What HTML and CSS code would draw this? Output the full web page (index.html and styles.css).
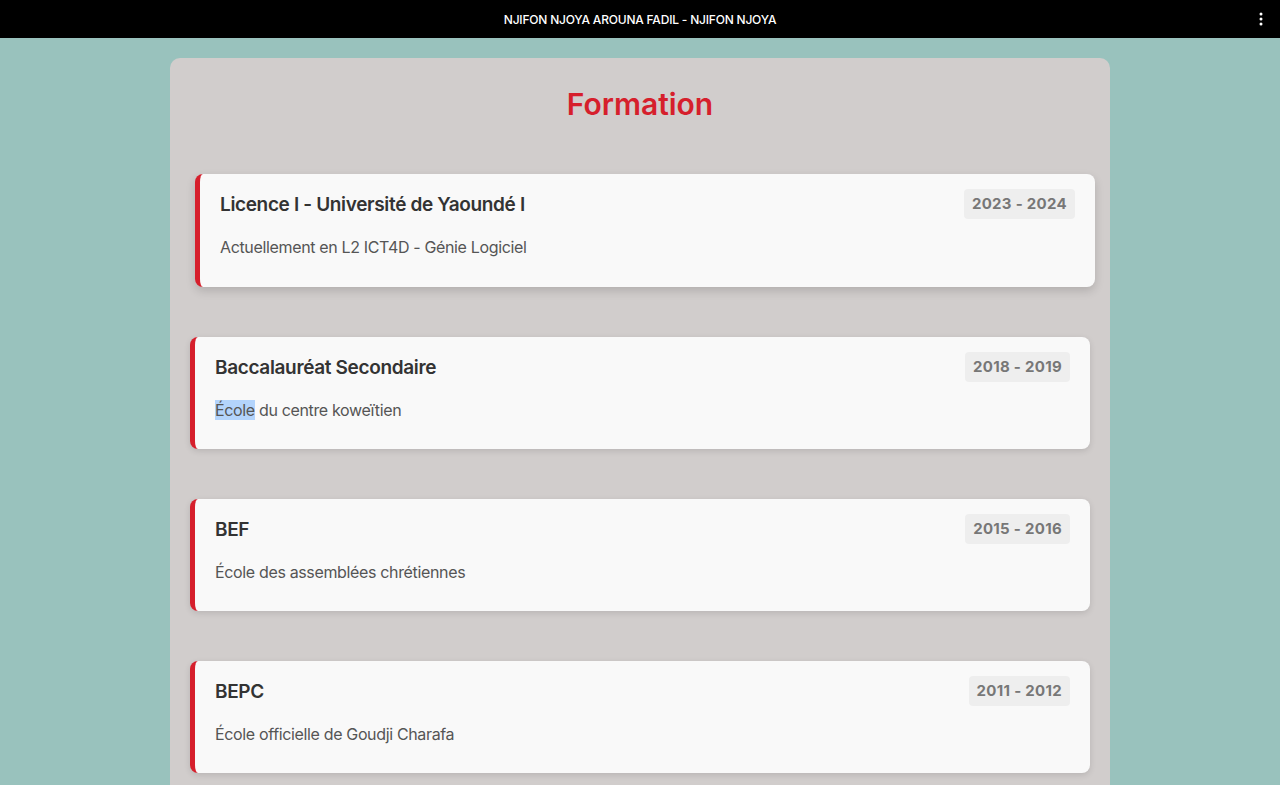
FILE: index.html
```html
<!DOCTYPE html>
<html lang="fr">
<head>
<meta charset="utf-8">
<title>NJIFON NJOYA AROUNA FADIL - NJIFON NJOYA</title>
<link rel="stylesheet" href="styles.css">
</head>
<body>
<header class="topbar">
  <span class="topbar-title">NJIFON NJOYA AROUNA FADIL - NJIFON NJOYA</span>
  <svg class="kebab" width="4" height="14" viewBox="0 0 4 14"><circle cx="2" cy="2" r="1.5" fill="#fff"/><circle cx="2" cy="7" r="1.5" fill="#fff"/><circle cx="2" cy="12" r="1.5" fill="#fff"/></svg>
</header>
<main class="page">
  <section class="panel">
    <h2 class="panel-title">Formation</h2>
    <div class="list">
      <article class="card card-hover">
        <div class="card-head">
          <h3 class="card-title">Licence I - Université de Yaoundé I</h3>
          <span class="badge">2023 - 2024</span>
        </div>
        <p class="card-desc">Actuellement en L2 ICT4D - Génie Logiciel</p>
      </article>
      <article class="card">
        <div class="card-head">
          <h3 class="card-title">Baccalauréat Secondaire</h3>
          <span class="badge">2018 - 2019</span>
        </div>
        <p class="card-desc"><span class="selected">École</span> du centre koweïtien</p>
      </article>
      <article class="card">
        <div class="card-head">
          <h3 class="card-title">BEF</h3>
          <span class="badge">2015 - 2016</span>
        </div>
        <p class="card-desc">École des assemblées chrétiennes</p>
      </article>
      <article class="card">
        <div class="card-head">
          <h3 class="card-title">BEPC</h3>
          <span class="badge">2011 - 2012</span>
        </div>
        <p class="card-desc">École officielle de Goudji Charafa</p>
      </article>
    </div>
  </section>
</main>
</body>
</html>
```

FILE: styles.css
```css
* { box-sizing: border-box; }
html, body { margin: 0; padding: 0; }
body {
  background: #99c2bd;
  font-family: Inter, "Noto Sans", sans-serif;
  height: 785px;
  overflow: hidden;
}
.topbar {
  height: 38px;
  background: #000;
  display: flex;
  align-items: center;
  justify-content: center;
  position: relative;
}
.topbar-title {
  color: #fff;
  font-size: 12px;
  font-weight: 500;
  letter-spacing: -0.2px;
}
.kebab {
  position: absolute;
  right: 17px;
  top: 12px;
}
.page {
  padding-top: 20px;
  display: flex;
  justify-content: center;
}
.panel {
  width: 940px;
  background: #d1cdcc;
  border-radius: 10px;
  padding: 0 20px 40px;
  min-height: 800px;
}
.panel-title {
  margin: 0;
  padding-top: 27px;
  height: 116px;
  text-align: center;
  color: #d61f2c;
  font-size: 30px;
  font-weight: 600;
  line-height: 39px;
}
.list {
  display: flex;
  flex-direction: column;
  gap: 50px;
}
.card {
  background: #f9f9f9;
  border-left: 5px solid #d61f2c;
  border-radius: 8px;
  box-shadow: 0 2px 6px rgba(0,0,0,0.12);
  padding: 15px 20px 26px 20px;
  height: 112px;
}
.card-hover {
  height: 113px;
  transform: translateX(5px);
  box-shadow: 0 4px 10px rgba(0,0,0,0.15);
}
.card-head {
  display: flex;
  justify-content: space-between;
  align-items: center;
  height: 30px;
  margin-bottom: 16px;
}
.card-title {
  margin: 0;
  font-size: 19px;
  font-weight: 600;
  letter-spacing: -0.35px;
  color: #333;
}
.badge {
  background: #eee;
  color: #777;
  font-weight: 700;
  font-size: 15px;
  letter-spacing: 0.3px;
  height: 30px;
  line-height: 30px;
  padding: 0 8px;
  border-radius: 4px;
}
.card-desc {
  margin: 0;
  font-size: 16px;
  line-height: 25.6px;
  letter-spacing: -0.35px;
  color: #555;
}
.selected {
  background: #b3d4fc;
}
```
